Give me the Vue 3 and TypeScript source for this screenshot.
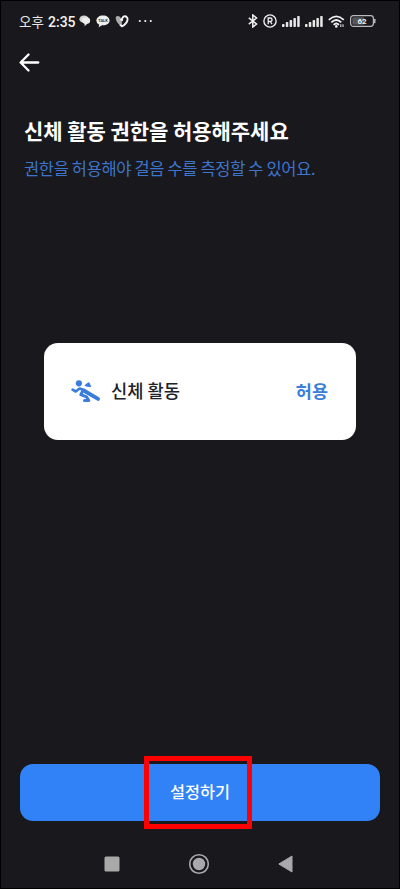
<script setup lang="ts">
const title = '신체 활동 권한을 허용해주세요'
const description = '권한을 허용해야 걸음 수를 측정할 수 있어요.'
const signals = ['sim1', 'sim2']
const bars = [3, 5, 7, 9, 11]
</script>

<template>
  <main class="screen">
    <header class="status">
      <span class="meridiem">오후</span>
      <span class="clock">2:35</span>
      <svg class="chat" width="12" height="12" viewBox="0 0 12 12">
        <ellipse cx="5" cy="4.2" rx="4.6" ry="3.7" fill="#d6d6d6" />
        <path d="M3 4.5Q4 2.2 7.5 2.2 11.2 2.4 11.2 5.8 11 8.6 8 9L5.6 11.2 5.6 8.9Q2.5 7.5 3 4.5Z" fill="#eee" />
      </svg>
      <svg class="talk" width="14" height="13" viewBox="0 0 14 13">
        <path d="M7 .4C3.2.4.4 2.5.4 5.4c0 1.9 1.1 3.4 2.8 4.2L2.7 12.3 6 10.3H7c3.8 0 6.6-2 6.6-4.9S10.8.4 7 .4Z" fill="#eee" />
        <text x="7" y="7.2" text-anchor="middle" class="talk-label">TALK</text>
      </svg>
      <svg class="heart" width="14" height="13" viewBox="0 0 14 13">
        <path d="M.7 3.3C.5 1 3 .2 5.2 2L6.8 6 7 11.6C3.5 9.5 1 7 .7 3.3Z" fill="#aaa" />
        <path d="M5.5 3.8 7 5.3C7 3 8 1.3 9.6 1.3c2 0 3.3 1.7 2.9 3.7C12 8 9.5 10 7 11.4L5 9.7" fill="none" stroke="#f2f2f2" stroke-width="1.9" stroke-linejoin="round" />
      </svg>
      <svg class="dots" width="15" height="4" viewBox="0 0 15 4">
        <circle cx="1.8" cy="2" r="1.1" /><circle cx="7.3" cy="2" r="1.1" /><circle cx="12.8" cy="2" r="1.1" />
      </svg>

      <svg class="bluetooth" width="10" height="14" viewBox="0 0 10 14">
        <path d="M.8 3.8 8.6 10 4.8 13V1L8.6 4 .8 10.2" fill="none" stroke="#eee" stroke-width="1.5" />
      </svg>
      <svg class="registered" width="14" height="14" viewBox="0 0 14 14">
        <circle cx="7" cy="7" r="6.1" fill="none" stroke="#eee" stroke-width="1.4" />
        <path d="M5.2 10.2V4h2.1a1.7 1.7 0 0 1 0 3.5H5.2M7.3 7.5 9 10.2" fill="none" stroke="#eee" stroke-width="1.3" />
      </svg>
      <svg v-for="s in signals" :key="s" class="signal" width="18" height="12" viewBox="0 0 18 12">
        <rect v-for="(h, i) in bars" :key="h" :x="i * 3.8" :y="12 - h" width="2.5" :height="h" rx=".7" fill="#e8e8e8" />
      </svg>
      <svg class="wifi" width="17" height="13" viewBox="0 0 17 13">
        <g fill="none" stroke="#eee" stroke-width="1.8">
          <path d="M.8 4.8Q8.3-2 15.8 4.8" />
          <path d="M3.3 7.4Q8.3 2.7 13.3 7.4" />
          <path d="M5.6 9.8Q8.3 7.2 11 9.8" />
        </g>
        <circle cx="8.3" cy="11.4" r="1.3" fill="#eee" />
        <path d="M12.8 9.3v2.8M15 9.3v2.8" stroke="#ccc" stroke-width="1.2" />
      </svg>
      <svg class="battery" width="26" height="12" viewBox="0 0 26 12">
        <rect x=".6" y=".6" width="22.8" height="10.8" rx="2.8" fill="none" stroke="#bbb" stroke-width="1.2" />
        <rect x="2.3" y="2.3" width="12" height="7.4" rx="1" fill="#55565a" />
        <path d="M24.8 4.3v3.4" stroke="#ccc" stroke-width="1.3" stroke-linecap="round" />
        <text x="12" y="8.9" text-anchor="middle" class="battery-label">62</text>
      </svg>
    </header>

    <nav class="toolbar">
      <button class="back" aria-label="뒤로">
        <svg width="21" height="19" viewBox="0 0 21 19">
          <path d="M9.5 1.5 1.6 9.5l7.9 8M2 9.5h17.3" fill="none" stroke="#fff" stroke-width="2.3" stroke-linecap="round" stroke-linejoin="round" />
        </svg>
      </button>
    </nav>

    <section class="intro">
      <h1>{{ title }}</h1>
      <p>{{ description }}</p>
    </section>

    <section class="card">
      <svg width="30" height="23" viewBox="0 0 30 23">
        <circle cx="7.9" cy="3.3" r="3.1" fill="#3b7ddd" />
        <path d="M13.3 5.5 17 2.6Q18 2 18.6 2.9L20.3 6.8Q17 7.6 13.3 5.5Z" fill="#3b7ddd" />
        <g fill="none" stroke="#3b7ddd" stroke-linecap="round" stroke-linejoin="round">
          <path d="M1.6 9.7 4.7 11.5 8.6 8.5 13.4 10" stroke-width="2.7" />
          <path d="M14 11.3 27 18.9" stroke-width="3.9" />
          <path d="M12 10.5 9.8 14.7 15.5 16.8 17.8 20.5H13.5" stroke-width="3" />
        </g>
      </svg>
      <span class="permission">신체 활동</span>
      <span class="allow">허용</span>
    </section>

    <footer class="action">
      <button class="submit">설정하기</button>
      <div class="highlight"></div>
    </footer>

    <nav class="system">
      <svg width="16" height="16" viewBox="0 0 16 16"><rect x=".5" y=".5" width="15" height="15" rx="1.5" fill="#a9a9ab" /></svg>
      <svg width="22" height="22" viewBox="0 0 22 22">
        <circle cx="11" cy="11" r="9.3" fill="none" stroke="#a9a9ab" stroke-width="1.6" />
        <circle cx="11" cy="11" r="6.2" fill="#a9a9ab" />
      </svg>
      <svg width="15" height="18" viewBox="0 0 15 18"><path d="M.8 9 14 1v16Z" fill="#a9a9ab" stroke="#a9a9ab" stroke-linejoin="round" /></svg>
    </nav>
  </main>
</template>

<style>
body {
  background: #000;
}
</style>

<style scoped>
.screen {
  box-sizing: border-box;
  width: 400px;
  height: 889px;
  display: flex;
  flex-direction: column;
  border: 1px solid #000;
  background: #19191d;
  font-family: 'Noto Sans CJK KR', sans-serif;
  color: #fff;
}
.screen > * {
  flex: none;
}
.status {
  height: 40px;
  display: flex;
  align-items: center;
  padding-left: 18px;
  white-space: nowrap;
}
.status svg {
  flex: none;
}
.meridiem {
  width: 29px;
  font-size: 13.5px;
  line-height: 20px;
  color: #e6e6e6;
}
.clock {
  width: 31px;
  padding-top: 2px;
  font: 500 14px/20px Roboto, sans-serif;
  color: #f2f2f2;
}
.talk {
  margin-left: 5px;
}
.talk-label {
  font: 700 4px Roboto, sans-serif;
  fill: #333;
}
.heart {
  margin-left: 5px;
}
.dots {
  margin-left: 9px;
  fill: #eee;
}
.bluetooth {
  margin-left: 95px;
}
.registered,
.signal,
.wifi,
.battery {
  margin-left: 5px;
}
.battery-label {
  font: 700 8px Roboto, sans-serif;
  fill: #eee;
}
.toolbar {
  height: 42px;
  display: flex;
  align-items: center;
  padding-left: 18px;
}
button {
  border: 0;
  padding: 0;
  font-family: inherit;
  color: #fff;
}
.back {
  display: flex;
  background: none;
}
.intro {
  padding: 31px 23px 0;
  white-space: nowrap;
}
h1 {
  margin: 0;
  font-size: 21px;
  font-weight: 700;
  line-height: 32px;
  letter-spacing: -0.05px;
}
p {
  margin: 9px 0 0;
  font-size: 16.5px;
  line-height: 26px;
  letter-spacing: -0.35px;
  color: #3d75cc;
}
.card {
  box-sizing: border-box;
  width: 312px;
  height: 97px;
  margin: 162px 0 0 43px;
  padding: 0 28px 0 27px;
  display: flex;
  align-items: center;
  border-radius: 14px;
  background: #fff;
  white-space: nowrap;
}
.permission {
  margin-left: 10px;
  padding-bottom: 3px;
  font-size: 17.7px;
  color: #20222a;
  font-weight: 500;
}
.allow {
  margin-left: auto;
  padding-bottom: 3px;
  font-size: 17.5px;
  font-weight: 700;
  color: #3c7edb;
}
.action {
  position: relative;
  margin: 324px 19px 0;
}
.submit {
  display: block;
  width: 360px;
  height: 57px;
  padding-bottom: 3px;
  border-radius: 13px;
  background: #3182f6;
  font-size: 16.3px;
  font-weight: 500;
}
.highlight {
  position: absolute;
  box-sizing: border-box;
  left: 124px;
  top: -8px;
  width: 108px;
  height: 73px;
  border: 5px solid #f00;
}
.system {
  box-sizing: border-box;
  display: flex;
  align-items: center;
  height: 67px;
  padding: 18px 0 0 103px;
  gap: 68px;
}
</style>
